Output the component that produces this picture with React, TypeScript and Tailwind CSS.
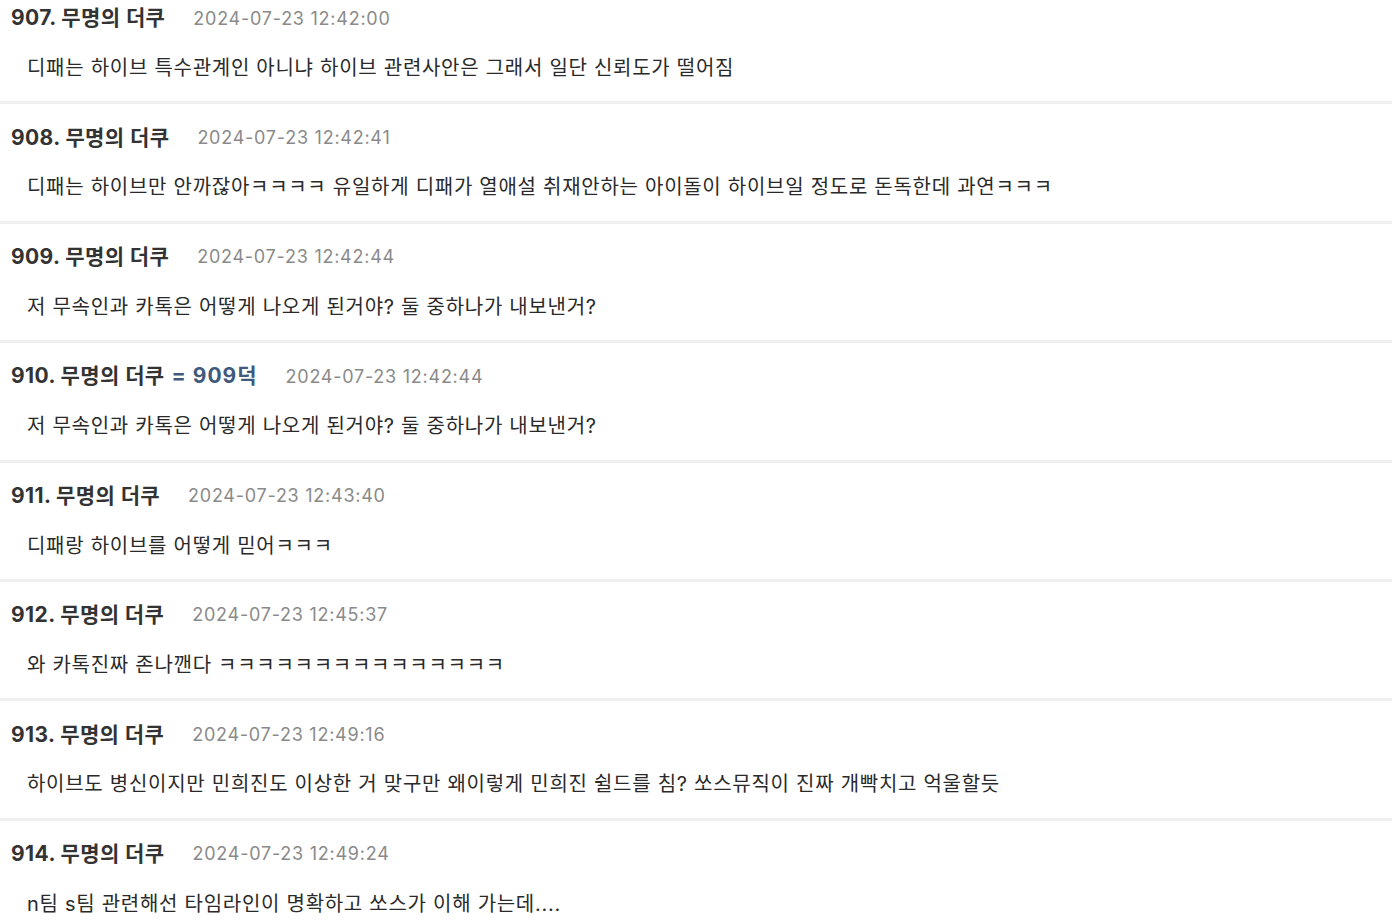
import React from "react";

interface Comment {
  no: number;
  name: string;
  reply?: string;
  date: string;
  body: string;
}

const comments: Comment[] = [
  { no: 907, name: "무명의 더쿠", date: "2024-07-23 12:42:00", body: "디패는 하이브 특수관계인 아니냐 하이브 관련사안은 그래서 일단 신뢰도가 떨어짐" },
  { no: 908, name: "무명의 더쿠", date: "2024-07-23 12:42:41", body: "디패는 하이브만 안까잖아ㅋㅋㅋㅋ 유일하게 디패가 열애설 취재안하는 아이돌이 하이브일 정도로 돈독한데 과연ㅋㅋㅋ" },
  { no: 909, name: "무명의 더쿠", date: "2024-07-23 12:42:44", body: "저 무속인과 카톡은 어떻게 나오게 된거야? 둘 중하나가 내보낸거?" },
  { no: 910, name: "무명의 더쿠", reply: "= 909덕", date: "2024-07-23 12:42:44", body: "저 무속인과 카톡은 어떻게 나오게 된거야? 둘 중하나가 내보낸거?" },
  { no: 911, name: "무명의 더쿠", date: "2024-07-23 12:43:40", body: "디패랑 하이브를 어떻게 믿어ㅋㅋㅋ" },
  { no: 912, name: "무명의 더쿠", date: "2024-07-23 12:45:37", body: "와 카톡진짜 존나깬다 ㅋㅋㅋㅋㅋㅋㅋㅋㅋㅋㅋㅋㅋㅋㅋ" },
  { no: 913, name: "무명의 더쿠", date: "2024-07-23 12:49:16", body: "하이브도 병신이지만 민희진도 이상한 거 맞구만 왜이렇게 민희진 쉴드를 침? 쏘스뮤직이 진짜 개빡치고 억울할듯" },
  { no: 914, name: "무명의 더쿠", date: "2024-07-23 12:49:24", body: "n팀 s팀 관련해선 타임라인이 명확하고 쏘스가 이해 가는데...." },
];

function CommentRow({ c }: { c: Comment }) {
  return (
    <li className="h-[119.4px] border-b-[3px] border-[#efefef] flex flex-col pt-[21px] gap-[24px]">
      <div className="flex items-center h-[24px] pl-[11px]">
        <span className="text-[21px] font-bold tracking-[0.4px] text-[#333]">
          {c.no}. {c.name}
        </span>
        {c.reply && (
          <span className="ml-[7px] text-[21px] font-bold tracking-[1px] text-[#40597c]">{c.reply}</span>
        )}
        <span className="ml-[28px] text-[18px] tracking-[0.75px] text-[#8a8a8a]">{c.date}</span>
      </div>
      <div className="h-[28px] flex items-center pl-[27px] text-[20px] tracking-[0.72px] text-[#2a2a2a] whitespace-pre">
        {c.body}
      </div>
    </li>
  );
}

export default function App() {
  return (
    <div
      className="w-[1392px] h-[924px] overflow-hidden bg-white"
      style={{ fontFamily: 'Inter, "Noto Sans CJK KR", sans-serif' }}
    >
      <ul className="-mt-[15px]">
        {comments.map((c) => (
          <CommentRow key={c.no} c={c} />
        ))}
      </ul>
    </div>
  );
}
